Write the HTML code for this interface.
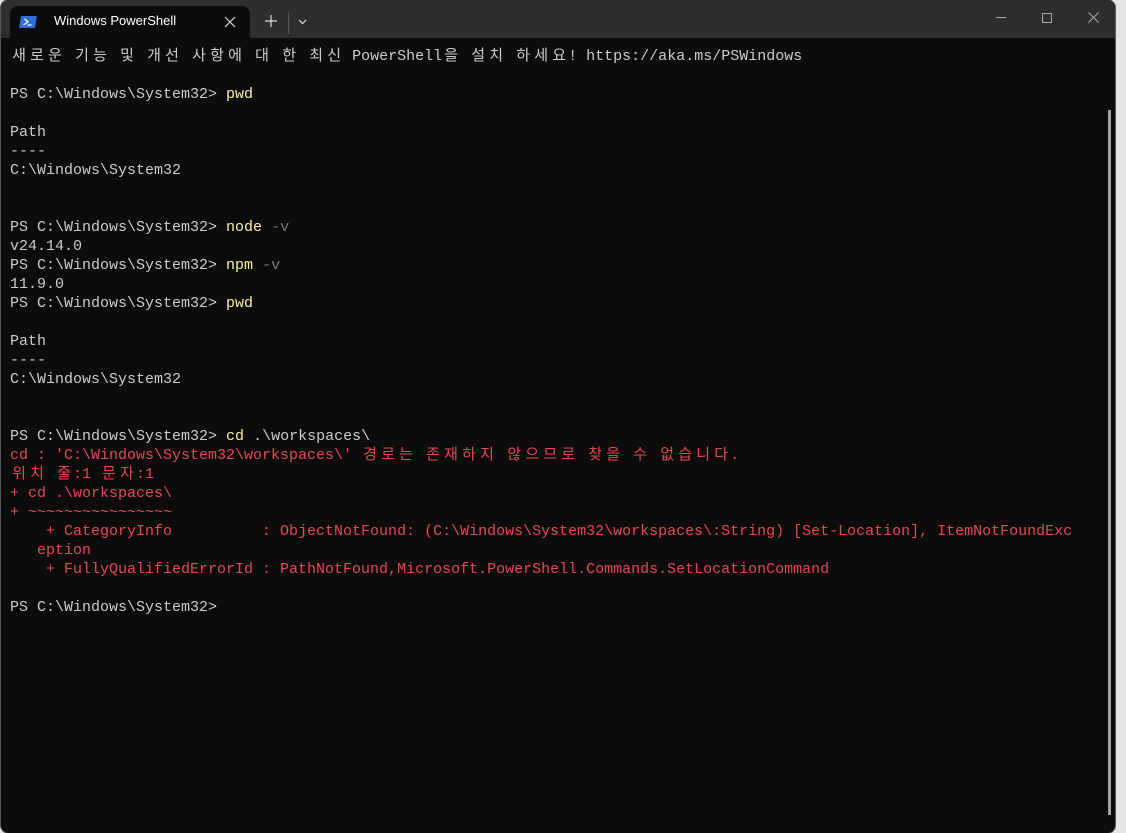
<!DOCTYPE html>
<html><head><meta charset="utf-8">
<style>
html,body{margin:0;padding:0;width:1126px;height:833px;overflow:hidden;background:#e4e4e4;}
.win{position:absolute;left:1px;top:0;width:1114px;height:833px;background:#0c0c0c;border-radius:8px;overflow:hidden;box-shadow:0 0 0 1px #555;}
.title{position:absolute;left:0;top:0;width:1114px;height:38px;background:#2e2e2e;}
.tab{position:absolute;left:9px;top:6px;width:240px;height:32px;background:#0c0c0c;border-radius:8px 8px 0 0;}
.tab .t{position:absolute;left:44px;top:7px;font:13px "Liberation Sans",sans-serif;color:#fff;}
.icon{position:absolute;left:10px;top:10px;width:16px;height:12px;background:#2f6fd6;border-radius:1px;transform:skewX(-10deg);}
pre{position:absolute;left:9px;top:47px;margin:0;font:15px/19px "Liberation Mono","Noto Sans CJK KR",monospace;color:#cccccc;}
.y{color:#f9f1a5}.g{color:#767676}.r{color:#e74856}
.k{display:inline-block;width:18px;text-align:center;}
.sb{position:absolute;left:1107px;top:110px;width:3px;height:705px;background:#a0a0a0;}
</style></head><body>
<div class="win">
<div class="title">
<div class="tab"><div class="icon"><svg width="16" height="12" style="position:absolute;left:0;top:0"><path d="M4 3l4 3-4 3M8 9h4" stroke="#fff" stroke-width="1.3" fill="none"/></svg></div><div class="t">Windows PowerShell</div>
<svg style="position:absolute;left:214px;top:10px" width="12" height="12"><path d="M1 1l10 10M11 1L1 11" stroke="#ddd" stroke-width="1.2"/></svg></div>
<svg style="position:absolute;left:264px;top:15px" width="12" height="12"><path d="M6 0v12M0 6h12" stroke="#ddd" stroke-width="1.2"/></svg>
<div style="position:absolute;left:287px;top:12px;width:1px;height:22px;background:#555"></div>
<svg style="position:absolute;left:297px;top:19px" width="9" height="6"><path d="M1 1l3.5 3.5L8 1" stroke="#ddd" stroke-width="1.2" fill="none"/></svg>
<div style="position:absolute;left:995px;top:17px;width:10px;height:1px;background:#aaa"></div>
<div style="position:absolute;left:1041px;top:13px;width:8px;height:8px;border:1px solid #aaa"></div>
<svg style="position:absolute;left:1087px;top:12px" width="11" height="11"><path d="M0.5 0.5l10 10M10.5 0.5l-10 10" stroke="#aaa" stroke-width="1"/></svg>
</div>
<pre id="p">새로운 기능 및 개선 사항에 대 한 최신 PowerShell을 설치 하세요! https://aka.ms/PSWindows

PS C:\Windows\System32&gt; <span class="y">pwd</span>

Path
----
C:\Windows\System32


PS C:\Windows\System32&gt; <span class="y">node</span> <span class="g">-v</span>
v24.14.0
PS C:\Windows\System32&gt; <span class="y">npm</span> <span class="g">-v</span>
11.9.0
PS C:\Windows\System32&gt; <span class="y">pwd</span>

Path
----
C:\Windows\System32


PS C:\Windows\System32&gt; <span class="y">cd</span> .\workspaces\
<span class="r">cd : 'C:\Windows\System32\workspaces\' 경로는 존재하지 않으므로 찾을 수 없습니다.
위치 줄:1 문자:1
+ cd .\workspaces\
+ ~~~~~~~~~~~~~~~~
    + CategoryInfo          : ObjectNotFound: (C:\Windows\System32\workspaces\:String) [Set-Location], ItemNotFoundExc
   eption
    + FullyQualifiedErrorId : PathNotFound,Microsoft.PowerShell.Commands.SetLocationCommand</span>

PS C:\Windows\System32&gt;</pre>
<div class="sb"></div>
</div>
<script>
(function(){var p=document.getElementById('p');
function w(n){if(n.nodeType==3){var t=n.nodeValue;if(!/[\uac00-\ud7a3]/.test(t))return;var f=document.createDocumentFragment();var buf='';for(var i=0;i<t.length;i++){var c=t[i];if(/[\uac00-\ud7a3]/.test(c)){if(buf){f.appendChild(document.createTextNode(buf));buf='';}var s=document.createElement('span');s.className='k';s.textContent=c;f.appendChild(s);}else buf+=c;}if(buf)f.appendChild(document.createTextNode(buf));n.parentNode.replaceChild(f,n);}else{var cs=Array.prototype.slice.call(n.childNodes);cs.forEach(w);}}
w(p);})();
</script>
</body></html>
